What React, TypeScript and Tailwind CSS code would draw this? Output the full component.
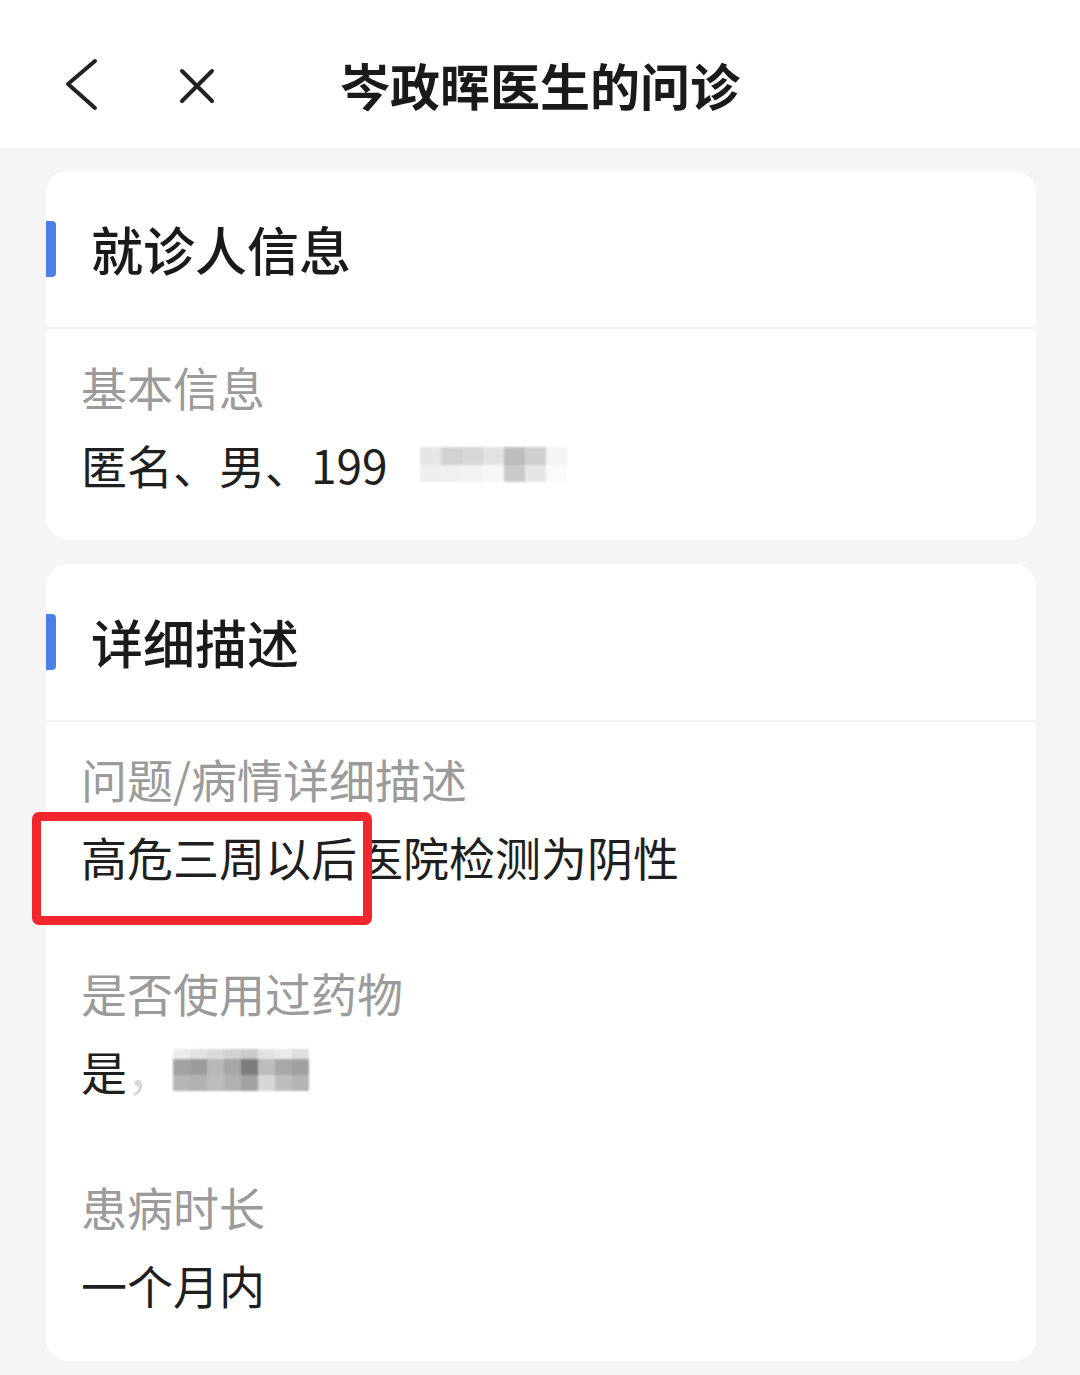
import React from 'react'

const FONT = { fontFamily: '"Noto Sans CJK SC", "Noto Sans", sans-serif' }

// 打码色块
const birthMosaic = [
  ['#e6e6e6', '#d2d2d2', '#d6d6d6', '#e2e2e2', '#bdbdbd', '#cfcfcf', '#f4f4f4'],
  ['#efefef', '#f0f0f0', '#f2f2f2', '#f7f7f7', '#cacaca', '#e6e6e6', '#fbfbfb'],
]

const drugMosaic = [
  ['#ececec', '#e2e2e2', '#dadada', '#d2d2d2', '#cacaca', '#e2e2e2', '#eaeaea', '#dedede'],
  ['#a2a2a2', '#9c9c9c', '#b8b8b8', '#a6a6a6', '#7c7c7c', '#bdbdbd', '#a8a8a8', '#a0a0a0'],
  ['#b6b6b6', '#b1b1b1', '#bcbcbc', '#b1b1b1', '#a2a2a2', '#d6d6d6', '#bdbdbd', '#b4b4b4'],
]

function Mosaic({ rows, cell, rowH, className }: { rows: string[][]; cell: number; rowH: number[]; className?: string }) {
  return (
    <div className={`flex flex-col blur-[1px] ${className ?? ''}`}>
      {rows.map((row, i) => (
        <div key={i} className="flex">
          {row.map((c, j) => (
            <div key={j} style={{ backgroundColor: c, width: cell, height: rowH[i] }} />
          ))}
        </div>
      ))}
    </div>
  )
}

function SectionTitle({ title }: { title: string }) {
  return (
    <div className="flex items-center h-[156px]">
      <div className="w-[10px] h-[56px] bg-[#4a80e8] rounded-r-[4px]" />
      <div className="ml-[35px] text-[52px] font-medium text-[#1a1a1a] leading-none">{title}</div>
    </div>
  )
}

function Item({ label, children, last }: { label: string; children: React.ReactNode; last?: boolean }) {
  return (
    <div className={last ? '' : 'mb-[58px]'}>
      <div className="text-[46px] leading-[78px] text-[#9b9b9b]">{label}</div>
      <div className="relative flex items-center h-[78px] text-[46px] leading-[78px] text-[#1f1f1f] whitespace-nowrap">
        {children}
      </div>
    </div>
  )
}

export default function App() {
  return (
    <div className="min-h-screen bg-[#f5f5f5]" style={FONT}>
      {/* 顶部导航 */}
      <header className="h-[148px] bg-white pt-[22px] grid grid-cols-[1fr_auto_1fr] items-center">
        <div className="flex items-center pl-[62px]">
          <svg width="40" height="56" viewBox="0 0 40 56" fill="none">
            <path d="M33 4 L6 27 L33 51" stroke="#222" strokeWidth="4" strokeLinecap="round" strokeLinejoin="round" />
          </svg>
          <svg width="40" height="40" viewBox="0 0 40 40" fill="none" className="ml-[74px]">
            <path d="M6 6 L36 36 M36 6 L6 36" stroke="#222" strokeWidth="4" strokeLinecap="round" />
          </svg>
        </div>
        <h1 className="text-[50px] font-bold text-[#1a1a1a] leading-none -mt-[2px]">岑政晖医生的问诊</h1>
        <div />
      </header>

      <main className="pl-[46px] pr-[44px] pt-[23px] flex flex-col gap-[25px] pb-[15px]">
        {/* 就诊人信息 */}
        <section className="bg-white rounded-[22px] overflow-hidden">
          <SectionTitle title="就诊人信息" />
          <div className="h-[2px] bg-[#f1f1f1]" />
          <div className="px-[35px] pt-[18px] pb-[36px]">
            <Item label="基本信息" last>
              <span>匿名、男、199</span>
              <Mosaic rows={birthMosaic} cell={21} rowH={[18, 17]} className="ml-[32px]" />
            </Item>
          </div>
        </section>

        {/* 详细描述 */}
        <section className="bg-white rounded-[22px]">
          <SectionTitle title="详细描述" />
          <div className="h-[2px] bg-[#f1f1f1]" />
          <div className="px-[35px] pt-[17px] pb-[38px]">
            <Item label="问题/病情详细描述">
              <div className="absolute left-[-49px] top-[-5px] w-[340px] h-[113px] border-[9px] border-[#f2262f] rounded-[7px] bg-white" />
              <span className="relative">高危三周以后</span>
              <span>医院检测为阴性</span>
            </Item>
            <Item label="是否使用过药物">
              <span>是</span>
              <span className="text-[#d8d8d8]">，</span>
              <Mosaic rows={drugMosaic} cell={17} rowH={[10, 16, 16]} />
            </Item>
            <Item label="患病时长" last>
              <span>一个月内</span>
            </Item>
          </div>
        </section>
      </main>
    </div>
  )
}
